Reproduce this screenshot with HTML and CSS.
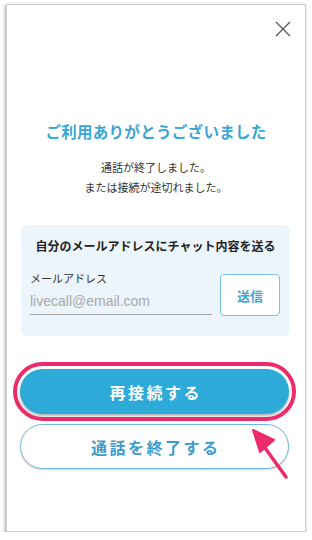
FILE: index.html
```html
<!DOCTYPE html>
<html lang="ja">
<head>
<meta charset="utf-8">
<link rel="stylesheet" href="styles.css">
</head>
<body>
<div class="phone">
  <div class="header">
    <button class="close" aria-label="閉じる">
      <svg width="16" height="16" viewBox="0 0 16 16"><path d="M1 1 L15 15 M15 1 L1 15" stroke="#555" stroke-width="1.3" fill="none"/></svg>
    </button>
  </div>
  <h1 class="title">ご利用ありがとうございました</h1>
  <p class="message">通話が終了しました。<br>または接続が途切れました。</p>
  <section class="mailbox">
    <h2 class="mailbox-title">自分のメールアドレスにチャット内容を送る</h2>
    <div class="mail-row">
      <div class="field">
        <div class="label">メールアドレス</div>
        <div class="input">livecall@email.com</div>
      </div>
      <button class="send">送信</button>
    </div>
  </section>
  <div class="actions">
    <button class="btn primary">再接続する</button>
    <button class="btn secondary">通話を終了する</button>
  </div>
  <svg class="arrow" width="50" height="60" viewBox="0 0 50 60">
    <path d="M38 53 L12 17" stroke="#ec2c6a" stroke-width="3.5" stroke-linecap="round" fill="none"/>
    <path d="M5 6 L26 16 L12 28 Z" fill="#ec2c6a" stroke="#ec2c6a" stroke-width="2" stroke-linejoin="round"/>
  </svg>
</div>
</body>
</html>
```
FILE: styles.css
```css
* { box-sizing: border-box; }
html, body { margin: 0; padding: 0; background: #fff; }
body {
  font-family: "Noto Sans CJK JP", "Noto Sans", sans-serif;
  color: #333;
}
.phone {
  position: relative;
  margin: 4px 0 0 6px;
  width: 300px;
  height: 528px;
  border: 1px solid #cfcfcf;
  box-shadow: -1px 1px 3px rgba(0,0,0,0.35);
  background: #fff;
}
.header {
  display: flex;
  justify-content: flex-end;
  padding: 16px 14px 0 0;
  height: 60px;
}
.close {
  border: 0;
  background: none;
  padding: 0;
  width: 16px;
  height: 16px;
  cursor: pointer;
}
.close svg { display: block; }
.title {
  margin: 56px 0 0;
  text-align: center;
  font-size: 15.5px;
  line-height: 20px;
  font-weight: 700;
  color: #3ba6d2;
  letter-spacing: 0.3px;
}
.message {
  margin: 16px 0 0;
  text-align: center;
  font-size: 11px;
  line-height: 20px;
  color: #333;
}
.mailbox {
  margin: 28px 15px 0 14px;
  height: 111px;
  background: #edf5fc;
  border-radius: 5px;
  padding: 13px 9px 0 9px;
}
.mailbox-title {
  margin: 0;
  text-align: center;
  font-size: 12px;
  line-height: 16px;
  font-weight: 700;
  color: #222;
}
.mail-row {
  display: flex;
  align-items: flex-start;
  justify-content: space-between;
  margin-top: 17px;
}
.field {
  width: 182px;
}
.label {
  font-size: 11px;
  line-height: 14px;
  color: #333;
}
.input {
  font-family: "Liberation Sans", Arial, sans-serif;
  font-size: 14px;
  line-height: 16px;
  color: #a8a8a8;
  padding: 8px 0 5px;
  border-bottom: 1px solid #a0a0a0;
}
.send {
  width: 60px;
  height: 42px;
  margin-top: 3px;
  margin-right: 1px;
  border: 1px solid #79c3e2;
  border-radius: 4px;
  background: #fff;
  font-family: "Noto Sans CJK JP", sans-serif;
  font-size: 13px;
  font-weight: 700;
  color: #3ba6d2;
  padding: 0;
}
.actions {
  display: flex;
  flex-direction: column;
  gap: 10px;
  margin: 33px 16px 0 13px;
}
.btn {
  height: 45px;
  border-radius: 23px;
  font-family: "Noto Sans CJK JP", sans-serif;
  font-size: 16px;
  font-weight: 700;
  letter-spacing: 2.5px;
  padding: 0 0 0 2.5px;
}
.primary {
  background: #2eaad9;
  color: #fff;
  border: 0;
  box-shadow: 0 2px 3px rgba(0,0,0,0.3);
  outline: 4px solid #ec2c6a;
  outline-offset: 3px;
}
.secondary {
  background: #fff;
  color: #3c9ccc;
  border: 1px solid #6fbddd;
  box-shadow: 0 1px 2px rgba(0,0,0,0.2);
}
.arrow {
  position: absolute;
  left: 241px;
  top: 419px;
}
```
